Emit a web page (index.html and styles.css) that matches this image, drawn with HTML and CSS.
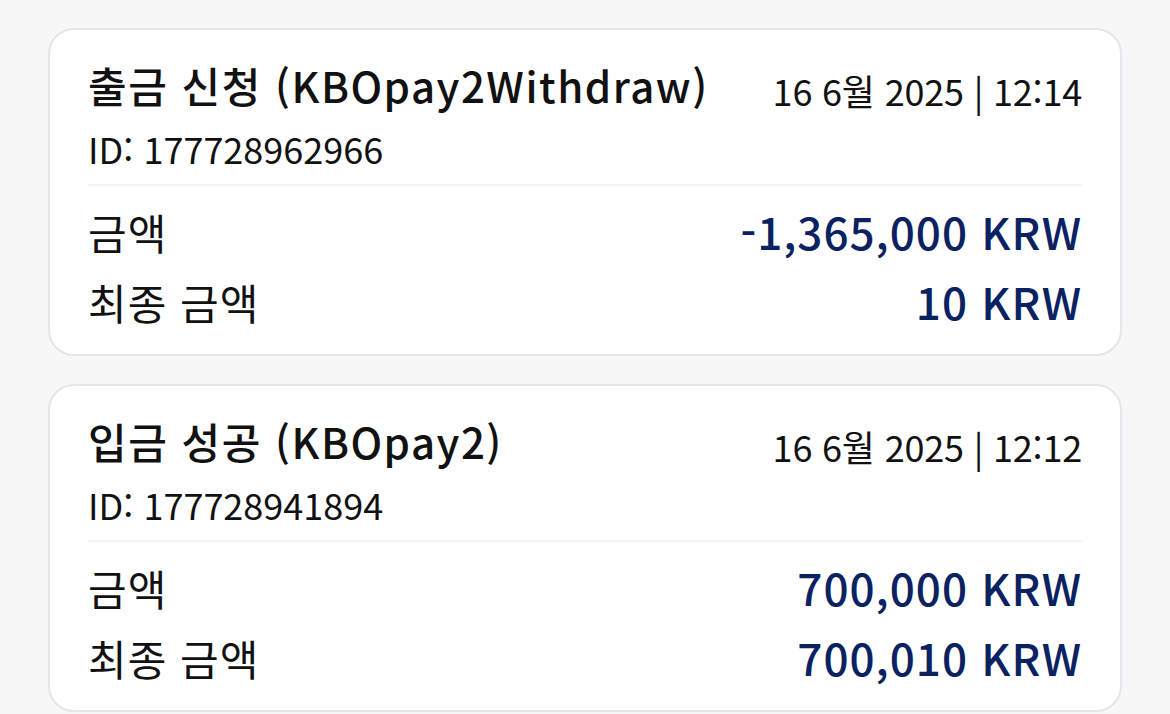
FILE: index.html
```html
<!DOCTYPE html>
<html lang="ko">
<head>
<meta charset="utf-8">
<link rel="stylesheet" href="styles.css">
</head>
<body>
<div class="list">
  <div class="card">
    <div class="head">
      <div class="title">출금 신청 (KBOpay2Withdraw)</div>
      <div class="date">16 6월 2025 | 12:14</div>
    </div>
    <div class="id">ID: 177728962966</div>
    <div class="divider"></div>
    <div class="rows">
      <div class="row"><span class="label">금액</span><span class="value">-1,365,000 KRW</span></div>
      <div class="row"><span class="label">최종 금액</span><span class="value">10 KRW</span></div>
    </div>
  </div>
  <div class="card">
    <div class="head">
      <div class="title">입금 성공 (KBOpay2)</div>
      <div class="date">16 6월 2025 | 12:12</div>
    </div>
    <div class="id">ID: 177728941894</div>
    <div class="divider"></div>
    <div class="rows">
      <div class="row"><span class="label">금액</span><span class="value">700,000 KRW</span></div>
      <div class="row"><span class="label">최종 금액</span><span class="value">700,010 KRW</span></div>
    </div>
  </div>
</div>
</body>
</html>
```

FILE: styles.css
```css
html, body {
  margin: 0;
  padding: 0;
  background: #f7f7f7;
}
body {
  font-family: "Noto Sans CJK KR", "Noto Sans", sans-serif;
  color: #111111;
}
.list {
  display: flex;
  flex-direction: column;
  gap: 28px;
  padding: 28px 48px 0 48px;
}
.card {
  background: #ffffff;
  border: 2px solid #e3e6eb;
  border-radius: 26px;
  padding: 25px 38px 22px 38px;
}
.head {
  display: flex;
  justify-content: space-between;
  align-items: flex-start;
}
.title {
  font-size: 42px;
  font-weight: 500;
  line-height: 60px;
  letter-spacing: 1.5px;
}
.date {
  font-size: 36px;
  line-height: 60px;
  margin-top: 5px;
  letter-spacing: -0.2px;
}
.id {
  font-size: 36px;
  line-height: 50px;
  margin-top: 3px;
}
.divider {
  height: 2px;
  background: #f3f3f3;
  margin-top: 11px;
}
.rows {
  display: flex;
  flex-direction: column;
  gap: 9px;
  margin-top: 15px;
}
.row {
  display: flex;
  justify-content: space-between;
  align-items: baseline;
  line-height: 60px;
}
.label {
  font-size: 42px;
  letter-spacing: 1px;
}
.value {
  font-size: 44px;
  font-weight: 500;
  color: #0b2262;
  letter-spacing: 1px;
}
```
